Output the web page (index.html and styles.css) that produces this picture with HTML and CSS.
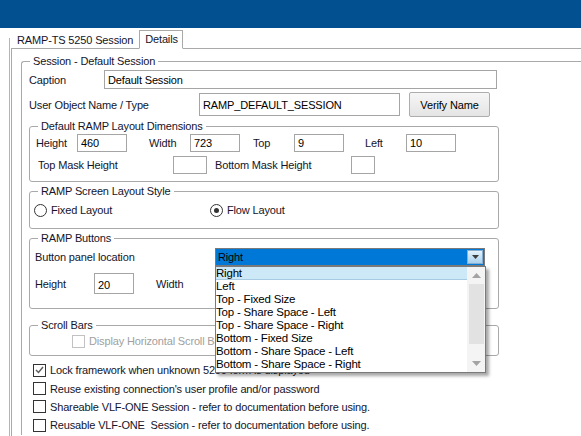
FILE: index.html
```html
<!DOCTYPE html>
<html lang="en">
<head>
  <meta charset="UTF-8" />
  <title>Session Details</title>
  <link rel="stylesheet" href="styles.css">
</head>
<body>

  <div class="titlebar"></div>

  <div class="workspace">
    <div class="side"></div>

    <div class="tabctl">
      <div class="tabs">
        <span class="tab">RAMP-TS 5250 Session</span>
        <span class="tab active">Details</span>
      </div>

      <div class="page">
        <fieldset class="group session">
          <legend>Session - Default Session</legend>

          <div class="row caption-row">
            <span class="lbl caption-lbl">Caption</span>
            <input class="txt caption-txt" type="text" value="Default Session">
          </div>

          <div class="row object-row">
            <span class="lbl object-lbl">User Object Name / Type</span>
            <input class="txt object-txt" type="text" value="RAMP_DEFAULT_SESSION">
            <button class="btn">Verify Name</button>
          </div>

          <fieldset class="group sub dims">
            <legend>Default RAMP Layout Dimensions</legend>
            <div class="row dims-row">
              <span class="lbl dim-lbl">Height</span>
              <input class="txt dim-txt" type="text" value="460">
              <span class="lbl dim-lbl gap22">Width</span>
              <input class="txt dim-txt" type="text" value="723">
              <span class="lbl dim-lbl gap13">Top</span>
              <input class="txt dim-txt" type="text" value="9">
              <span class="lbl dim-lbl gap21">Left</span>
              <input class="txt dim-txt" type="text" value="10">
            </div>
            <div class="row mask-row">
              <span class="lbl mask-lbl">Top Mask Height</span>
              <input class="txt mask-top" type="text" value="">
              <span class="lbl mask-lbl bottom-lbl">Bottom Mask Height</span>
              <input class="txt mask-bottom" type="text" value="">
            </div>
          </fieldset>

          <fieldset class="group sub style">
            <legend>RAMP Screen Layout Style</legend>
            <div class="row radio-row">
              <span class="radio-item fixed"><span class="radio"></span>Fixed Layout</span>
              <span class="radio-item flow"><span class="radio on"></span>Flow Layout</span>
            </div>
          </fieldset>

          <fieldset class="group sub buttons">
            <legend>RAMP Buttons</legend>
            <div class="row location-row">
              <span class="lbl location-lbl">Button panel location</span>
              <div class="combo">
                <span class="combo-value">Right</span>
                <span class="combo-arrow">
                  <svg width="7" height="4" viewBox="0 0 7 4"><path d="M0 0h7L3.5 4z" fill="#3c3c3c"/></svg>
                </span>

                <div class="droplist">
                  <ul class="items">
                    <li class="selected">Right</li>
                    <li>Left</li>
                    <li>Top - Fixed Size</li>
                    <li>Top - Share Space - Left</li>
                    <li>Top - Share Space - Right</li>
                    <li>Bottom - Fixed Size</li>
                    <li>Bottom - Share Space - Left</li>
                    <li>Bottom - Share Space - Right</li>
                  </ul>
                  <div class="scrollbar">
                    <svg class="arrow-up" width="9" height="5" viewBox="0 0 9 5"><path d="M0 5h9L4.5 0z" fill="#a3a3a3"/></svg>
                    <div class="thumb"></div>
                    <svg class="arrow-down" width="9" height="5" viewBox="0 0 9 5"><path d="M0 0h9L4.5 5z" fill="#a3a3a3"/></svg>
                  </div>
                </div>
              </div>
            </div>
            <div class="row size-row">
              <span class="lbl size-lbl">Height</span>
              <input class="txt size-txt" type="text" value="20">
              <span class="lbl width-lbl">Width</span>
            </div>
          </fieldset>

          <fieldset class="group sub scroll">
            <legend>Scroll Bars</legend>
            <div class="row check-row disabled hscroll">
              <span class="check"></span>Display Horizontal Scroll Bars
            </div>
          </fieldset>

          <div class="options">
            <div class="row check-row"><span class="check on"><svg width="9" height="8" viewBox="0 0 9 8"><path d="M1 4l2.5 2.5L8 1" fill="none" stroke="#5a5a5a" stroke-width="1.4"/></svg></span>Lock framework when unknown 5250 form is displayed</div>
            <div class="row check-row"><span class="check"></span>Reuse existing connection's user profile and/or password</div>
            <div class="row check-row"><span class="check"></span>Shareable VLF-ONE Session - refer to documentation before using.</div>
            <div class="row check-row"><span class="check"></span>Reusable VLF-ONE&nbsp; Session - refer to documentation before using.</div>
          </div>
        </fieldset>
      </div>
    </div>
  </div>

</body>
</html>
```

FILE: styles.css
```css
:root {
  --line: #a9a9a9;
  --field: #a5a5a5;
  --text: #14142a;
}

body {
  margin: 0;
  width: 581px;
  height: 436px;
  overflow: hidden;
  background: #fff;
  font-family: "Liberation Sans", Arial, sans-serif;
  font-size: 11px;
  letter-spacing: -0.15px;
  color: var(--text);
}

.titlebar {
  height: 28px;
  background: #02508f;
}

.workspace {
  display: flex;
  height: 408px;
  overflow: hidden;
}

.side {
  width: 9px;
  margin-top: 10px;
  border-right: 1px solid #b4b4b4;
  flex: none;
}

.tabctl {
  margin-left: 1px;
  padding-top: 3px;
  flex: 1;
  min-width: 0;
  display: flex;
  flex-direction: column;
}

/* tab strip */
.tabs {
  display: flex;
  align-items: flex-end;
  height: 17px;
  flex: none;
}

.tab {
  padding: 0 6px;
  line-height: 16px;
}

.tab.active {
  position: relative;
  z-index: 1;
  padding: 0 4px 0 5px;
  line-height: 17px;
  border: 1px solid var(--line);
  border-bottom: 1px solid #fff;
  margin-bottom: -1px;
  background: #fff;
}

.page {
  flex: 1;
  min-height: 0;
  overflow: hidden;
  border-top: 1px solid var(--line);
  border-left: 1px solid var(--line);
  padding: 5px 0 0 9px;
}

/* group boxes */
.group {
  margin: 0;
  border: 1px solid var(--line);
  border-radius: 3px;
  min-width: 0;
}

.group legend {
  margin-left: 1px;
  padding: 0 3px;
  line-height: 14px;
}

.session {
  box-sizing: border-box;
  width: 100%;
  padding: 2px 0 0 7px;
  border-right: none;
  border-bottom: none;
  border-radius: 3px 0 0 0;
}

.sub {
  width: 456px;
  padding: 0 6px 0 6px;
}

.sub legend {
  margin-left: 2px;
}

.row {
  display: flex;
  align-items: center;
}

.lbl {
  flex: none;
}

.txt {
  box-sizing: border-box;
  margin: 0;
  padding: 0 3px;
  border: 1px solid var(--field);
  font: inherit;
  letter-spacing: inherit;
  color: #000;
  background: #fff;
  outline: none;
}

/* caption + user object */
.caption-row {
  height: 19px;
}

.caption-lbl {
  width: 75px;
}

.caption-txt {
  width: 393px;
  height: 19px;
}

.object-row {
  margin-top: 3px;
  height: 25px;
}

.object-lbl {
  width: 170px;
}

.object-txt {
  width: 201px;
  height: 23px;
}

.btn {
  margin-left: 9px;
  width: 81px;
  height: 25px;
  padding: 0;
  border: 1px solid #adadad;
  border-radius: 2px;
  background: linear-gradient(#f6f6f6, #e4e4e4);
  font: inherit;
  letter-spacing: inherit;
  color: #000;
}

/* layout dimensions */
.dims {
  margin-top: 2px;
  padding-bottom: 7px;
}

.dims-row {
  margin-top: 1px;
  height: 18px;
}

.dim-lbl {
  width: 41px;
}

.dim-txt {
  width: 50px;
  height: 18px;
}

.gap22 { margin-left: 22px; }
.gap13 { margin-left: 13px; }
.gap21 { margin-left: 21px; }

.mask-row {
  margin-top: 4px;
  height: 18px;
}

.mask-lbl {
  width: 135px;
  margin-left: 2px;
}

.bottom-lbl {
  width: 136px;
  margin-left: 8px;
}

.mask-top {
  width: 34px;
  height: 18px;
}

.mask-bottom {
  width: 24px;
  height: 18px;
}

/* layout style radios */
.style {
  margin-top: 2px;
  padding-bottom: 6px;
}

.radio-row {
  height: 24px;
  margin-left: -2px;
}

.radio-item {
  display: flex;
  align-items: center;
}

.radio-item.fixed {
  width: 176px;
}

.radio {
  box-sizing: border-box;
  width: 13px;
  height: 13px;
  margin-right: 4px;
  border: 1px solid #333;
  border-radius: 50%;
  background: #fff;
  display: flex;
  align-items: center;
  justify-content: center;
}

.radio.on::after {
  content: "";
  width: 5px;
  height: 5px;
  border-radius: 50%;
  background: #333;
}

/* ramp buttons */
.buttons {
  margin-top: 2px;
  padding-bottom: 14px;
}

.location-row {
  height: 23px;
  margin-left: -1px;
}

.location-lbl {
  width: 180px;
}

.combo {
  position: relative;
  box-sizing: border-box;
  width: 270px;
  height: 18px;
  border: 1px solid #7a7a7a;
  background: #0078d7;
  display: flex;
  align-items: center;
  justify-content: space-between;
}

.combo-value {
  padding-left: 2px;
  color: #000;
}

.combo-arrow {
  box-sizing: border-box;
  width: 16px;
  height: 14px;
  margin-right: 1px;
  border: 1px solid #86aed0;
  background: linear-gradient(#e4f1fb, #a9d1ee);
  display: flex;
  align-items: center;
  justify-content: center;
}

.droplist {
  position: absolute;
  z-index: 5;
  top: 17px;
  left: -1px;
  box-sizing: border-box;
  width: 271px;
  height: 107px;
  border: 1px solid #7a7a7a;
  background: #fff;
  box-shadow: 3px 3px 3px rgba(0, 0, 0, 0.35);
  display: flex;
}

.items {
  list-style: none;
  margin: 0;
  padding: 0;
  flex: 1;
  font-size: 11.5px;
  letter-spacing: -0.2px;
  color: #000;
}

.items li {
  height: 13px;
  line-height: 13px;
}

.items li.selected {
  background: #cde8f7;
  border-bottom: 1px solid #a6cbe3;
  height: 12px;
}

.scrollbar {
  width: 18px;
  background: #f4f4f4;
  display: flex;
  flex-direction: column;
  align-items: center;
}

.arrow-up {
  margin-top: 6px;
}

.thumb {
  width: 15px;
  height: 60px;
  margin-top: 6px;
  background: #e2e2e2;
}

.arrow-down {
  margin-top: auto;
  margin-bottom: 6px;
}

.size-row {
  margin-top: 5px;
  height: 21px;
  margin-left: -1px;
}

.size-lbl {
  width: 59px;
}

.size-txt {
  width: 40px;
  height: 21px;
  padding-top: 3px;
}

.width-lbl {
  margin-left: 22px;
}

/* scroll bars + options */
.scroll {
  margin-top: 9px;
  padding-bottom: 6px;
}

.check-row {
  height: 18px;
  white-space: nowrap;
}

.hscroll {
  margin-top: 1px;
  height: 16px;
  padding-left: 36px;
}

.check {
  box-sizing: border-box;
  width: 13px;
  height: 13px;
  margin-right: 4px;
  border: 1px solid #333;
  background: #fff;
  display: flex;
  align-items: center;
  justify-content: center;
  flex: none;
}

.disabled {
  color: #a0a0a0;
}

.disabled .check {
  border-color: #c2c2c2;
}

.options {
  margin-top: 5px;
  margin-left: 4px;
}

.options .check-row {
  height: 18.4px;
}
```
